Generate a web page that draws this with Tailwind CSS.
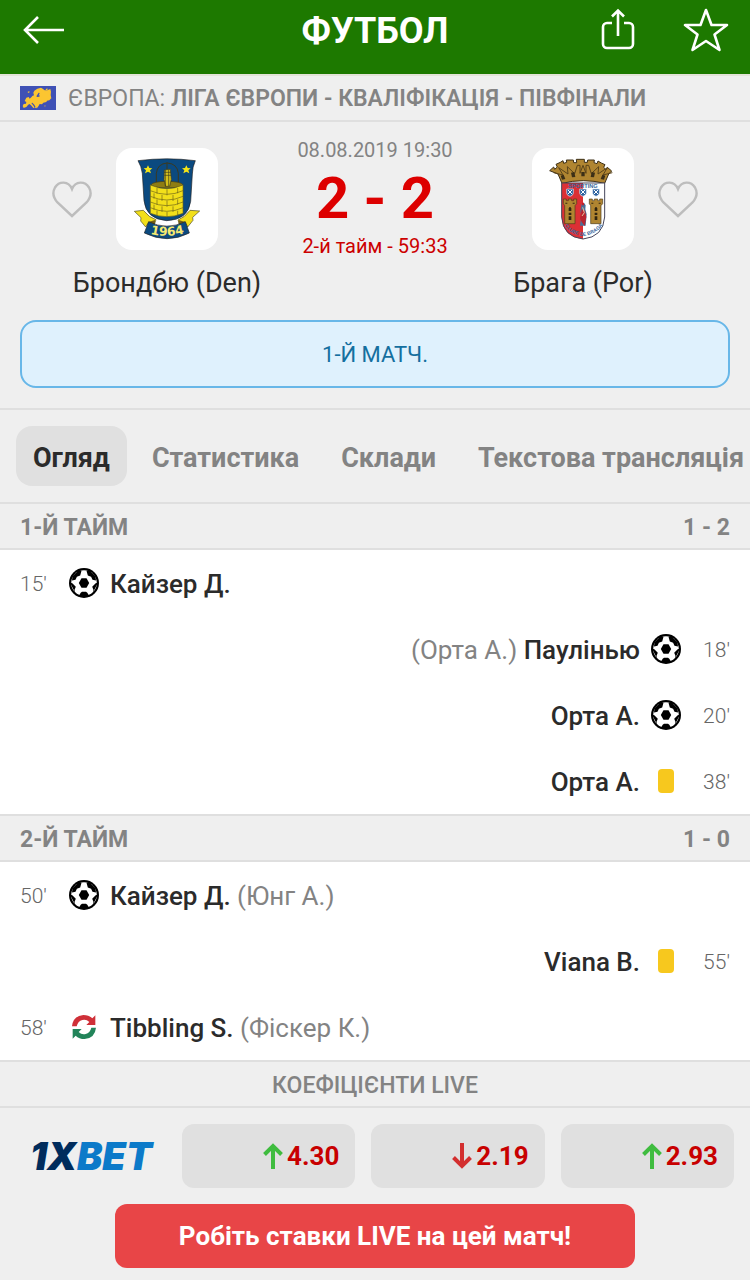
<!DOCTYPE html>
<html lang="uk">

<head>
    <meta charset="UTF-8">
    <meta name="viewport" content="width=device-width, initial-scale=1.0">
    <title>Футбол - Брондбю - Брага</title>
    <script src="https://cdn.jsdelivr.net/npm/@tailwindcss/browser@4"></script>
</head>

<body class="min-h-screen bg-[#efefef] font-['Roboto',sans-serif] text-[#2b2b2b]">

    <!-- Shared icons -->
    <svg class="hidden" aria-hidden="true">
        <symbol id="ball" viewBox="-1 -1 32 32">
            <circle cx="15" cy="15" r="15" fill="#000" />
            <circle cx="15" cy="15" r="12.8" fill="#fff" />
            <path d="M12.5 10.2h5l2.700 4.800-2.700 4.800h-5L9.800 15z" fill="#000" />
            <path d="M3.500 8.500 9.500 2.200l3 .6-1.300 4.600-3.300 1.300-1.400 3-3.500.8zM26.500 8.500 20.500 2.200l-3 .6 1.300 4.600 3.300 1.300 1.400 3 3.500.8zM1 14.500l2.300.8 3.500 3.400-1.300 3.200.8 3.300zM29 14.500l-2.300.8-3.500 3.400 1.300 3.200-.8 3.300zM9.500 28.500l2.200-3.800 1.300-1h4l1.300 1 2.200 3.800z" fill="#000" />
        </symbol>
        <symbol id="heart" viewBox="0 0 40 40">
            <path d="M20 37 5.500 23.500C1 18.500.5 13 3 8.500 7 2 16.500 1.500 20 10c3.500-8.500 13-8 17-1.500 2.500 4.500 2 10-2.500 15z" fill="none" stroke="#bdbdbd" stroke-width="2.4" />
        </symbol>
        <symbol id="arrow-up" viewBox="0 0 20 26">
            <path d="M10 26V4M1.500 11.500 10 3l8.500 8.500" fill="none" stroke="currentColor" stroke-width="4" />
        </symbol>
    </svg>

    <!-- Header -->
    <header class="grid grid-cols-[1fr_auto_1fr] items-start border-b-2 border-[#e3e3d8] bg-[#1d7900] text-white">
        <button class="mt-2 ml-5 flex h-11 w-12 items-center" aria-label="Назад">
            <svg class="h-8 w-12" viewBox="0 0 48 32" fill="none" stroke="currentColor" stroke-width="2.6">
                <path d="M44 16H5M18 3 5 16l13 13" />
            </svg>
        </button>
        <h1 class="flex h-[74px] items-start pt-2 text-[36px] leading-[46px] font-bold">ФУТБОЛ</h1>
        <div class="mr-5 flex items-center justify-end gap-[46px] pt-2">
            <button aria-label="Поділитися">
                <svg class="h-11 w-9" viewBox="0 0 36 44" fill="none" stroke="currentColor" stroke-width="2.6">
                    <path d="M12 15H7a4 4 0 0 0-4 4v17a4 4 0 0 0 4 4h22a4 4 0 0 0 4-4V19a4 4 0 0 0-4-4h-5M18 28V3M12 8.500 18 2.500l6 6" />
                </svg>
            </button>
            <button aria-label="До обраного">
                <svg class="h-11 w-12" viewBox="0 0 48 44" fill="none" stroke="currentColor" stroke-width="2.6" stroke-linejoin="round">
                    <path d="m24 2 5.500 15H45L32.500 26.500 37.500 42 24 33 10.500 42l5-15.500L3 17h15.500z" />
                </svg>
            </button>
        </div>
    </header>

    <!-- League -->
    <div class="flex h-[46px] items-center gap-3 border-b-2 border-[#dfdfdf] px-5 text-[23px] text-[#838383]">
        <svg class="h-6 w-9 shrink-0" viewBox="0 0 108 72">
            <path fill="#3f51b5" d="M0 0h108v72H0z" />
            <path fill="#fbc531" d="m19 35 7-2 3 5 5-4 3-4 5-2-2-8 3-6 9-6 11-3 5 3 6 5 8 0 9-4 2 8-1 10 2 10-6 6-7 1-2 4-9 2-4 5-7-1-3 5-4 6-5-1-4-8-6-6-3 1 7 9 3 5-4 1-7-8-5-4-4 3-5 6-8 3-3-6 3-6 7-1 1-5-5-3z" />
            <path fill="#3f51b5" d="m50 29 6-9 3 1-3 8 4-1-2 4-8 1z" />
            <path fill="#fbc531" d="m23 17 5-1 1 3-5 2zM77 10l5-3 1 4-5 2zM46 63l5 1-2 3-4-2zM72 59l6 0-1 2-5 0z" />
        </svg>
        <p class="pt-0.5">ЄВРОПА: <a href="#" class="font-semibold">ЛІГА ЄВРОПИ - КВАЛІФІКАЦІЯ - ПІВФІНАЛИ</a></p>
    </div>

    <!-- Match -->
    <section class="border-b-2 border-[#dfdfdf] px-5 pt-4 pb-5">
        <div class="grid grid-cols-[1fr_162px_1fr] px-5">
            <div class="pt-2.5 text-center">
                <div class="grid grid-cols-[1fr_auto_1fr] items-center">
                    <button class="mr-6 justify-self-end" aria-label="Стежити за Брондбю">
                        <svg class="size-10"><use href="#heart" /></svg>
                    </button>
                    <div class="size-[102px] overflow-hidden rounded-2xl bg-white">
                        <svg class="size-full" viewBox="18 24 306 306">
                            <path d="M84 62q87-11 172 0-9 19-9 40l-5 82q-7 56-72 58-62-5-68-60l-5-82q-3-22-13-38z" fill="#0b4a80" stroke="#222" stroke-width="2" />
                            <path d="m114 76 4 8 9 1-7 6 3 9-9-5-9 5 3-9-7-6 9-1zM229 76l4 8 9 1-7 6 3 9-9-5-9 5 3-9-7-6 9-1z" fill="#f5e516" />
                            <path d="M139 133V100q3-29 33-31 30 2 33 31v33" fill="none" stroke="#3b3a20" stroke-width="3" />
                            <path d="M171 67v22" stroke="#3b3a20" stroke-width="3" />
                            <ellipse cx="171" cy="134" rx="47" ry="10" fill="#8f7d12" stroke="#3b3a20" stroke-width="2" />
                            <path d="m163 90 18-2 3 30-5 21h-12l-5-21z" fill="#d5c01b" stroke="#3b3a20" stroke-width="2" />
                            <path d="M162 97h21M163 106h20M166 90v50M176 90v48" stroke="#3b3a20" stroke-width="2" />
                            <path d="M121 135q50 22 98 0v85q-49 21-98 0z" fill="#f2df1a" />
                            <path d="M121 135q50 22 98 0M121 152q50 22 98 0M121 169q50 22 98 0M121 186q50 22 98 0M121 203q50 22 98 0M121 220q50 20 98 0" fill="none" stroke="#6d6418" stroke-width="2" />
                            <path d="M121 134v86M219 134v86M141 144v17M171 148v18M203 144v16M132 160v16M156 165v18M189 165v18M141 178v17M171 182v18M203 178v16M132 194v16M156 199v17M189 199v17M141 212v16M171 216v15M203 212v15" stroke="#6d6418" stroke-width="2" />
                            <path d="m73 214 27-3 18 18 20 10-4 12-18-4-9 14-15-18 1-10zM269 213l-29-2-17 18-19 11 4 12 17-6 8 15 16-20-1-9z" fill="#f2df1a" stroke="#4d4a22" stroke-width="2" />
                            <path d="m115 246 20-6v16zM226 246l-20-6v16z" fill="#755f16" />
                            <path d="M116 245q54 27 110 0l12 34q-66 34-135 0z" fill="#0b4a80" stroke="#222" stroke-width="2" />
                            <path id="ribbon" d="M112 279q58 18 120-1" fill="none" />
                            <text font-family="DejaVu Sans, sans-serif" font-weight="700" font-size="37" fill="#f5e970"><textPath href="#ribbon" startOffset="50%" text-anchor="middle">1964</textPath></text>
                        </svg>
                    </div>
                </div>
                <h2 class="mt-3 text-[27px] leading-[42px]">Брондбю (Den)</h2>
            </div>

            <div class="text-center text-[20px] leading-6 whitespace-nowrap">
                <p class="text-[#838383]">08.08.2019 19:30</p>
                <p class="text-[58px] leading-[72px] font-bold text-[#dd0000]">2 - 2</p>
                <p class="text-[#cc0000]">2-й тайм - 59:33</p>
            </div>

            <div class="pt-2.5 text-center">
                <div class="grid grid-cols-[1fr_auto_1fr] items-center">
                    <div class="col-start-2 size-[102px] overflow-hidden rounded-2xl bg-white">
                        <svg class="size-full" viewBox="18 24 306 306">
                            <path d="m71 92 12-11 3 7 8-7-4-8 13-6 8-5 2 8 9-3-1-7h21l1 8h9l-1-10h24v9h9l1-7h20l-1 8 9 3 3-8 10 6 11 5-4 8 7 7 4-7 13 11-9 9-12 28q-64-16-128 0l-12-28z" fill="#b08531" stroke="#3c2f17" stroke-width="3" />
                            <path d="m83 98 28 7-13-22 28 19-2-22 22 21 8-25h8v24l9-24 9 24v-24h8l8 25 22-21-2 22 28-19-13 22 28-7" fill="none" stroke="#5a4319" stroke-width="3" />
                            <path d="m108 119-4-12 9-3 5 13zM138 112l-3-14 10-2 3 15zM166 109V96h10v13zM204 112l3-14-10-2-3 15zM234 119l4-12-9-3-5 13z" fill="#3c2f17" />
                            <path d="M107 129h64v168q-61-6-64-66z" fill="#dc3035" />
                            <path d="M171 129h65v102q-3 60-65 66z" fill="#fff" />
                            <path d="M107 129h129v102q-4 60-65 66-60-6-64-66z" fill="none" stroke="#45455b" stroke-width="3" />
                            <text x="171" y="144" text-anchor="middle" font-family="Liberation Sans, sans-serif" font-weight="700" font-size="17" fill="#39679d">SPORTING</text>
                            <g fill="#2d62a0" stroke="#dce8f4" stroke-width="2">
                                <path d="M122 147h20v13q-2 8-10 9-8-1-10-9zM161 147h20v13q-2 8-10 9-8-1-10-9zM200 147h20v13q-2 8-10 9-8-1-10-9z" />
                            </g>
                            <path d="m126 150 12 12m0-12-12 12M165 150l12 12m0-12-12 12M204 150l12 12m0-12-12 12" stroke="#fff" stroke-width="3" />
                            <g fill="#b08531" stroke="#4c391a" stroke-width="2">
                                <path id="tower" d="M112 177h9v5h6v-5h10v5h6v-5h9v14l-5 6v54h-31v-54l-4-6z" />
                                <use href="#tower" x="78" />
                            </g>
                            <path d="M128 205q4-8 8 0v8h-8zM128 218h8v7h-8zM128 229h8v11h-8zM206 205q4-8 8 0v8h-8zM206 218h8v7h-8zM206 229h8v11h-8zM118 188h6v3h-6zM140 188h6v3h-6zM196 188h6v3h-6zM218 188h6v3h-6z" fill="#30240f" />
                            <path d="m167 192 7-4 5 8-1 12 4 15-3 34h-17l4-29-3-14z" fill="#496f99" />
                            <path d="m167 208 10 4 4 19-5 27-9-12-5-11zM168 188h6v8h-6z" fill="#ba2531" />
                            <path d="m170 202 5 16-7 10" fill="none" stroke="#e6c7a0" stroke-width="3" />
                            <path id="motto" d="M116 254q10 26 55 35 45-9 60-35" fill="none" />
                            <text font-family="Liberation Sans, sans-serif" font-weight="700" font-size="15" fill="#39679d"><textPath href="#motto" startOffset="50%" text-anchor="middle">CLUBE DE BRAGA</textPath></text>
                        </svg>
                    </div>
                    <button class="ml-6 justify-self-start" aria-label="Стежити за Брагою">
                        <svg class="size-10"><use href="#heart" /></svg>
                    </button>
                </div>
                <h2 class="mt-3 text-[27px] leading-[42px]">Брага (Por)</h2>
            </div>
        </div>
        <p class="mt-4 flex h-[68px] items-center justify-center rounded-2xl border-2 border-[#68b7e8] bg-[#dff1fd] text-[22px] text-[#146f9f]">1-Й МАТЧ.</p>
    </section>

    <!-- Tabs -->
    <nav class="flex h-[94px] items-center gap-2 overflow-x-auto border-b-2 border-[#dfdfdf] pl-4 text-[27px] font-bold whitespace-nowrap text-[#838383] [scrollbar-width:none]">
        <button class="h-[60px] rounded-2xl bg-[#e0e0e0] px-[17px] pt-1 text-[#2b2b2b]">Огляд</button>
        <button class="h-[60px] px-[17px] pt-1">Статистика</button>
        <button class="h-[60px] px-[17px] pt-1">Склади</button>
        <button class="h-[60px] px-[17px] pt-1">Текстова трансляція</button>
    </nav>

    <!-- First half -->
    <h3 class="flex h-[46px] items-center justify-between border-b-2 border-[#dfdfdf] px-5 pt-1 text-[23px] font-bold text-[#838383]">
        <span>1-Й ТАЙМ</span><span>1 - 2</span>
    </h3>
    <ul class="bg-white text-[26px] font-medium">
        <li class="flex h-[66px] items-center px-5">
            <time class="w-12 pt-1 text-[21px] font-light text-[#666]">15'</time>
            <svg class="mr-2.5 size-8"><use href="#ball" /></svg>
            <p class="pt-0.5">Кайзер Д.</p>
        </li>
        <li class="flex h-[66px] flex-row-reverse items-center px-5">
            <time class="w-12 pt-1 text-right text-[21px] font-light text-[#666]">18'</time>
            <svg class="ml-2.5 size-8"><use href="#ball" /></svg>
            <p class="pt-0.5"><span class="font-normal text-[#838383]">(Орта А.)</span> Паулінью</p>
        </li>
        <li class="flex h-[66px] flex-row-reverse items-center px-5">
            <time class="w-12 pt-1 text-right text-[21px] font-light text-[#666]">20'</time>
            <svg class="ml-2.5 size-8"><use href="#ball" /></svg>
            <p class="pt-0.5">Орта А.</p>
        </li>
        <li class="flex h-[66px] flex-row-reverse items-center px-5">
            <time class="w-12 pt-1 text-right text-[21px] font-light text-[#666]">38'</time>
            <span class="ml-2.5 flex w-8 justify-center"><span class="h-6 w-4 rounded-sm bg-[#f7c81e]"></span></span>
            <p class="pt-0.5">Орта А.</p>
        </li>
    </ul>

    <!-- Second half -->
    <h3 class="flex h-12 items-center justify-between border-y-2 border-[#dfdfdf] px-5 pt-1 text-[23px] font-bold text-[#838383]">
        <span>2-Й ТАЙМ</span><span>1 - 0</span>
    </h3>
    <ul class="bg-white text-[26px] font-medium">
        <li class="flex h-[66px] items-center px-5">
            <time class="w-12 pt-1 text-[21px] font-light text-[#666]">50'</time>
            <svg class="mr-2.5 size-8"><use href="#ball" /></svg>
            <p class="pt-0.5">Кайзер Д. <span class="font-normal text-[#838383]">(Юнг А.)</span></p>
        </li>
        <li class="flex h-[66px] flex-row-reverse items-center px-5">
            <time class="w-12 pt-1 text-right text-[21px] font-light text-[#666]">55'</time>
            <span class="ml-2.5 flex w-8 justify-center"><span class="h-6 w-4 rounded-sm bg-[#f7c81e]"></span></span>
            <p class="pt-0.5">Viana B.</p>
        </li>
        <li class="flex h-[66px] items-center px-5">
            <time class="w-12 pt-1 text-[21px] font-light text-[#666]">58'</time>
            <span class="mr-2.5 flex w-8 justify-center">
                <svg class="size-6" viewBox="0 0 72 72">
                    <path d="M0 34Q3 3 34 0q17 0 27 10l9-9v29H43l9-9Q43 12 31 15 18 18 14 34z" fill="#cf3038" />
                    <path d="M72 38q-3 31-34 34-17 0-27-10l-9 9V42h27l-9 9q9 9 21 6 13-3 17-19z" fill="#22845a" />
                </svg>
            </span>
            <p class="pt-0.5">Tibbling S. <span class="font-normal text-[#838383]">(Фіскер К.)</span></p>
        </li>
    </ul>

    <!-- Odds -->
    <h3 class="flex h-12 items-center justify-center border-y-2 border-[#dfdfdf] pt-1 text-[23px] font-medium text-[#838383]">КОЕФІЦІЄНТИ LIVE</h3>
    <div class="grid grid-cols-[150px_1fr_1fr_1fr] items-center gap-4 p-4 text-[26px] font-bold text-[#c80000]">
        <a href="#" class="text-center font-['Inter',sans-serif] text-[38px] leading-10 font-black text-[#0c7ac9] italic"><span class="text-[#002c5c]">1X</span>BET</a>
        <button class="flex h-16 items-center justify-end gap-1 rounded-xl bg-[#e0e0e0] pr-4">
            <svg class="h-[26px] w-5 text-[#3fbc3f]"><use href="#arrow-up" /></svg>4.30
        </button>
        <button class="flex h-16 items-center justify-end gap-1 rounded-xl bg-[#e0e0e0] pr-4">
            <svg class="h-[26px] w-5 rotate-180 text-[#d32f2f]"><use href="#arrow-up" /></svg>2.19
        </button>
        <button class="flex h-16 items-center justify-end gap-1 rounded-xl bg-[#e0e0e0] pr-4">
            <svg class="h-[26px] w-5 text-[#3fbc3f]"><use href="#arrow-up" /></svg>2.93
        </button>
    </div>
    <div class="flex justify-center px-4 pb-3">
        <button class="h-16 w-full max-w-[520px] rounded-xl bg-[#e84547] text-[26px] font-bold text-white">Робіть ставки LIVE на цей матч!</button>
    </div>

</body>

</html>
